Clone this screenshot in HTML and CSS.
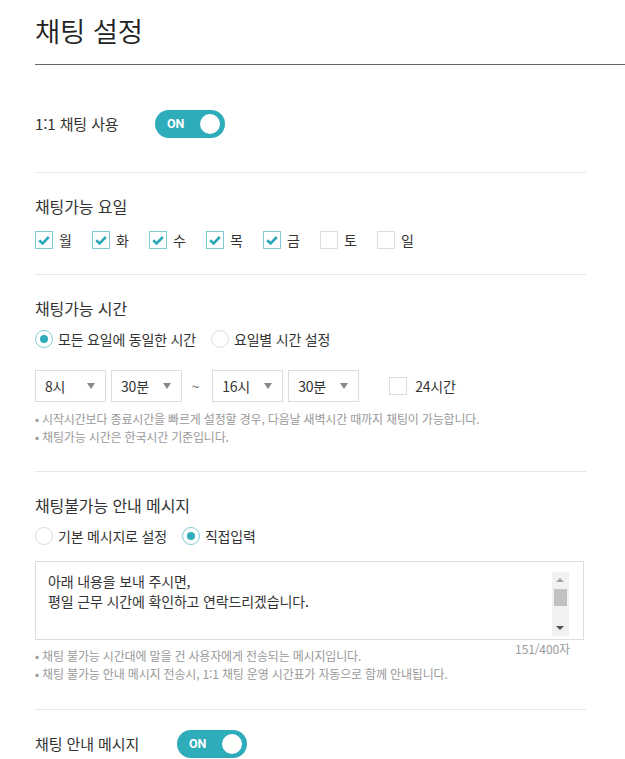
FILE: index.html
```html
<!DOCTYPE html>
<html lang="ko">
<head>
<meta charset="utf-8">
<title>채팅 설정</title>
<link rel="stylesheet" href="styles.css">
</head>
<body>
<div class="page">
  <header class="page-header">
    <h1 class="page-title">채팅 설정</h1>
  </header>

  <div class="content">
    <section class="section section-first">
      <div class="inline-row">
        <span class="row-label">1:1 채팅 사용</span>
        <span class="toggle"><span class="toggle-text">ON</span><span class="toggle-knob"></span></span>
      </div>
    </section>

    <section class="section">
      <h2 class="section-title">채팅가능 요일</h2>
      <div class="days">
        <label class="check-item"><span class="checkbox checked"><svg viewBox="0 0 18 18" width="18" height="18"><path d="M4.2 9.2 L7.6 12.4 L13.8 6" fill="none" stroke="#2aa7b6" stroke-width="2.6"/></svg></span><span class="check-text">월</span></label>
        <label class="check-item"><span class="checkbox checked"><svg viewBox="0 0 18 18" width="18" height="18"><path d="M4.2 9.2 L7.6 12.4 L13.8 6" fill="none" stroke="#2aa7b6" stroke-width="2.6"/></svg></span><span class="check-text">화</span></label>
        <label class="check-item"><span class="checkbox checked"><svg viewBox="0 0 18 18" width="18" height="18"><path d="M4.2 9.2 L7.6 12.4 L13.8 6" fill="none" stroke="#2aa7b6" stroke-width="2.6"/></svg></span><span class="check-text">수</span></label>
        <label class="check-item"><span class="checkbox checked"><svg viewBox="0 0 18 18" width="18" height="18"><path d="M4.2 9.2 L7.6 12.4 L13.8 6" fill="none" stroke="#2aa7b6" stroke-width="2.6"/></svg></span><span class="check-text">목</span></label>
        <label class="check-item"><span class="checkbox checked"><svg viewBox="0 0 18 18" width="18" height="18"><path d="M4.2 9.2 L7.6 12.4 L13.8 6" fill="none" stroke="#2aa7b6" stroke-width="2.6"/></svg></span><span class="check-text">금</span></label>
        <label class="check-item"><span class="checkbox"></span><span class="check-text">토</span></label>
        <label class="check-item"><span class="checkbox"></span><span class="check-text">일</span></label>
      </div>
    </section>

    <section class="section section-time">
      <h2 class="section-title">채팅가능 시간</h2>
      <div class="radios">
        <label class="radio-item"><span class="radio selected"><span class="radio-dot"></span></span><span class="radio-text">모든 요일에 동일한 시간</span></label>
        <label class="radio-item"><span class="radio"></span><span class="radio-text">요일별 시간 설정</span></label>
      </div>
      <div class="time-row">
        <div class="select"><span>8시</span><span class="caret"></span></div>
        <div class="select"><span>30분</span><span class="caret"></span></div>
        <span class="tilde">~</span>
        <div class="select"><span>16시</span><span class="caret"></span></div>
        <div class="select"><span>30분</span><span class="caret"></span></div>
        <label class="check-item all-day"><span class="checkbox"></span><span class="check-text">24시간</span></label>
      </div>
      <ul class="notes">
        <li>시작시간보다 종료시간을 빠르게 설정할 경우, 다음날 새벽시간 때까지 채팅이 가능합니다.</li>
        <li>채팅가능 시간은 한국시간 기준입니다.</li>
      </ul>
    </section>

    <section class="section section-msg">
      <h2 class="section-title">채팅불가능 안내 메시지</h2>
      <div class="radios">
        <label class="radio-item"><span class="radio"></span><span class="radio-text">기본 메시지로 설정</span></label>
        <label class="radio-item"><span class="radio selected"><span class="radio-dot"></span></span><span class="radio-text">직접입력</span></label>
      </div>
      <div class="message-box">
        <div class="message-text">아래 내용을 보내 주시면,<br>평일 근무 시간에 확인하고 연락드리겠습니다.</div>
        <div class="scrollbar">
          <span class="sb-up"></span>
          <span class="sb-thumb"></span>
          <span class="sb-down"></span>
        </div>
      </div>
      <div class="message-foot">
        <ul class="notes notes-msg">
          <li>채팅 불가능 시간대에 말을 건 사용자에게 전송되는 메시지입니다.</li>
          <li>채팅 불가능 안내 메시지 전송시, 1:1 채팅 운영 시간표가 자동으로 함께 안내됩니다.</li>
        </ul>
        <span class="count">151/400자</span>
      </div>
    </section>

    <section class="section section-last">
      <div class="inline-row">
        <span class="row-label">채팅 안내 메시지</span>
        <span class="toggle"><span class="toggle-text">ON</span><span class="toggle-knob"></span></span>
      </div>
    </section>
  </div>
</div>
</body>
</html>
```

FILE: styles.css
```css
* { box-sizing: border-box; }

html, body {
  margin: 0;
  padding: 0;
  background: #fff;
}

body {
  font-family: "Noto Sans CJK KR", "Noto Sans", sans-serif;
  color: #333;
  overflow: hidden;
}

.page {
  padding-left: 35px;
}

.page-header {
  border-bottom: 1px solid #666;
  height: 65px;
  padding-top: 10px;
}

.page-title {
  margin: 0;
  font-size: 27.5px;
  font-weight: 350;
  line-height: 40px;
  color: #222;
  letter-spacing: -0.2px;
}

.content {
  width: 551px;
}

.section {
  border-bottom: 1px solid #e6e6e6;
  padding: 21px 0 22px;
}

.section-first {
  padding: 45px 0 34px;
}

.section-time {
  padding-bottom: 25px;
}

.section-msg {
  padding-bottom: 26px;
}

.section-last {
  border-bottom: none;
  padding: 20px 0 0;
}

.inline-row {
  display: flex;
  align-items: center;
  height: 28px;
}

.row-label {
  font-size: 15px;
  line-height: 20px;
  color: #333;
  letter-spacing: -0.1px;
}

.section-first .row-label { width: 120px; }
.section-last .row-label { width: 142px; }

.toggle {
  position: relative;
  display: inline-flex;
  align-items: center;
  width: 70px;
  height: 28px;
  border-radius: 14px;
  background: #2eacba;
  padding-left: 12px;
}

.toggle-text {
  color: #fff;
  font-family: "Roboto", "Liberation Sans", sans-serif;
  font-weight: 700;
  font-size: 12.5px;
  line-height: 14px;
}

.toggle-knob {
  position: absolute;
  right: 5px;
  top: 4px;
  width: 20px;
  height: 20px;
  border-radius: 50%;
  background: #fff;
}

.section-title {
  margin: 0;
  font-size: 16px;
  font-weight: 400;
  line-height: 24px;
  color: #333;
  letter-spacing: -0.1px;
}

.days {
  display: flex;
  margin-top: 10px;
  height: 24px;
  align-items: center;
}

.check-item {
  display: inline-flex;
  align-items: center;
  width: 57px;
}

.checkbox {
  width: 18px;
  height: 18px;
  border: 1px solid #ddd;
  background: #fff;
  display: inline-block;
  flex: none;
}

.checkbox.checked {
  border-color: #7fcbd4;
  position: relative;
}

.checkbox.checked svg {
  position: absolute;
  left: -1px;
  top: -1px;
}

.check-text {
  margin-left: 6px;
  font-size: 14px;
  line-height: 20px;
  color: #333;
}

.radios {
  display: flex;
  align-items: center;
  margin-top: 7px;
  height: 24px;
}

.radio-item {
  display: inline-flex;
  align-items: center;
  margin-right: 15px;
}

.radio {
  width: 18px;
  height: 18px;
  border-radius: 50%;
  border: 1px solid #ddd;
  display: inline-flex;
  align-items: center;
  justify-content: center;
  flex: none;
}

.radio.selected {
  border-color: #7fcbd4;
}

.radio-dot {
  width: 8px;
  height: 8px;
  border-radius: 50%;
  background: #2eacba;
}

.radio-text {
  margin-left: 5px;
  font-size: 14px;
  line-height: 20px;
  color: #333;
  letter-spacing: -0.2px;
}

.time-row {
  display: flex;
  align-items: center;
  margin-top: 19px;
  height: 32px;
}

.select {
  width: 71px;
  height: 32px;
  border: 1px solid #ddd;
  display: flex;
  align-items: center;
  justify-content: space-between;
  padding: 0 10px 0 9px;
  font-size: 14px;
  color: #333;
  margin-right: 5px;
  letter-spacing: -0.2px;
}

.caret {
  width: 0;
  height: 0;
  border-left: 4px solid transparent;
  border-right: 4px solid transparent;
  border-top: 6px solid #888;
}

.tilde {
  font-size: 13px;
  color: #555;
  margin: 0 13px 0 5px;
}

.all-day {
  margin-left: 25px;
  width: auto;
}

.all-day .check-text { margin-left: 8px; letter-spacing: -0.2px; }

.notes {
  list-style: none;
  margin: 8px 0 0;
  padding: 0;
  font-size: 12px;
  line-height: 18px;
  color: #999;
  letter-spacing: -0.17px;
}

.notes li::before {
  content: "• ";
}

.message-box {
  position: relative;
  margin-top: 13px;
  margin-right: 2px;
  height: 79px;
  border: 1px solid #ddd;
  padding: 9px 12px;
}

.message-text {
  font-size: 14px;
  line-height: 20px;
  color: #333;
  letter-spacing: -0.15px;
}

.scrollbar {
  position: absolute;
  right: 14px;
  top: 10px;
  bottom: 3px;
  width: 17px;
  background: #f1f1f1;
}

.sb-up, .sb-down {
  position: absolute;
  left: 4px;
  width: 0;
  height: 0;
  border-left: 4px solid transparent;
  border-right: 4px solid transparent;
}

.sb-up {
  top: 6px;
  border-bottom: 4px solid #a3a3a3;
}

.sb-down {
  bottom: 6px;
  border-top: 4px solid #505050;
}

.sb-thumb {
  position: absolute;
  left: 2px;
  right: 2px;
  top: 17px;
  height: 17px;
  background: #c1c1c1;
}

.message-foot {
  display: flex;
  justify-content: space-between;
  align-items: flex-start;
}

.notes-msg {
  margin-top: 7px;
}

.count {
  font-size: 12px;
  line-height: 18px;
  color: #999;
  margin-right: 16px;
  letter-spacing: -0.1px;
}
```
